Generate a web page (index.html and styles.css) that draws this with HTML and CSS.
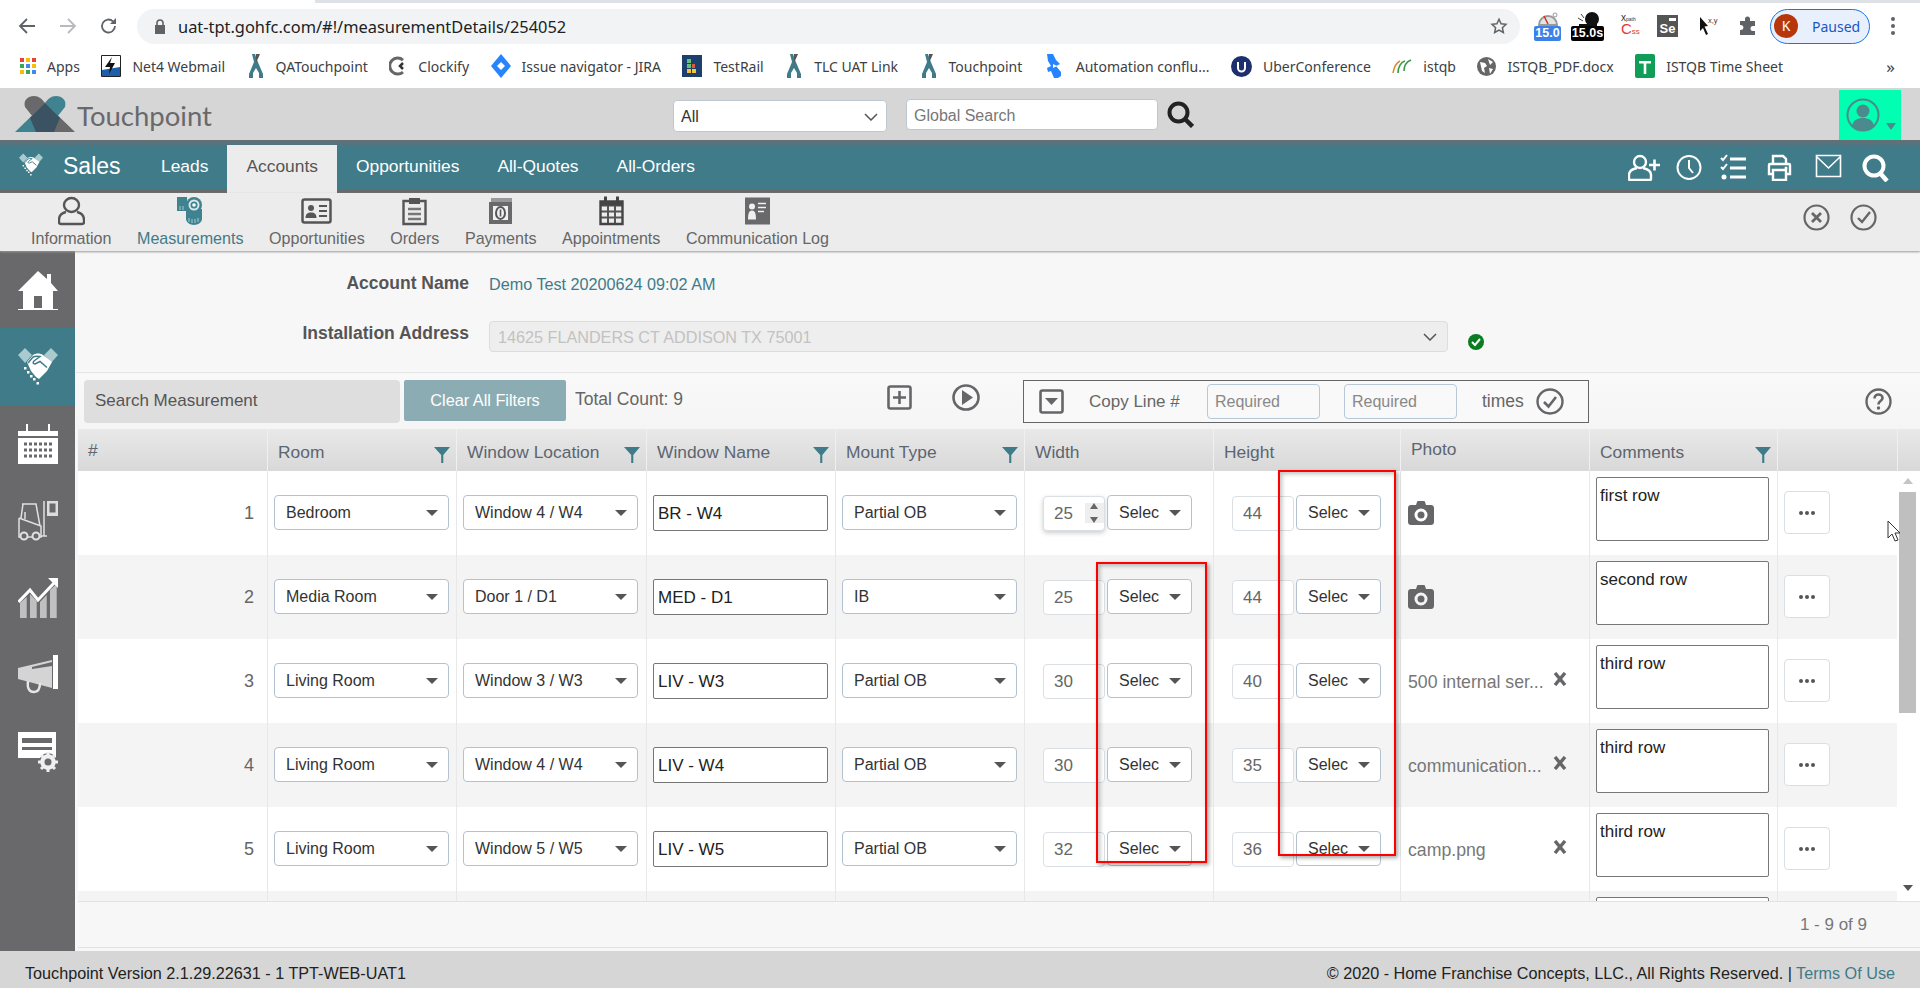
FILE: index.html
```html
<!DOCTYPE html>
<html lang="en">
<head>
  <meta charset="UTF-8" />
  <title>Touchpoint</title>
  <link rel="stylesheet" href="styles.css">
</head>
<body>
  <svg class="defs" width="0" height="0">
    <symbol id="shake" viewBox="0 0 40 40">
      <path fill="#a9cbd0" d="M7 1l7 7-7 8-7-8zM33 1l7 7-7 8-7-8z"/>
      <path fill="#fff" d="M9 15l6-7c3-2 7-2 10 0l9 7-5 9-8 8-3-2-5-6z"/>
      <path fill="none" stroke="#3f7b89" stroke-width="1.500" d="M10 16l5-6c2-1 4-1 7-.5l-6 4.500c-1.500 1.500-1 3 1 3l5-2.500 7 6"/>
      <path fill="#fff" d="M6 20h2.500v2.500H6zM9 24h2.500v2.500H9zM12 28h2.500v2.500H12zM15 31h2.500v2.500H15zM18.500 35H21v2.500h-2.500z"/>
    </symbol>
    <symbol id="filter" viewBox="0 0 16 16">
      <path fill="#3f7b89" d="M0 0h16L9.300 8v8H7.200V8z"/>
    </symbol>
    <symbol id="camera" viewBox="0 0 26 24">
      <path fill="#666669" fill-rule="evenodd" d="M3 4h5l1-3c.2-.6.6-1 1.400-1h5.200c.8 0 1.200.4 1.400 1l1 3h5c1.700 0 3 1.300 3 3v14c0 1.700-1.300 3-3 3H3c-1.700 0-3-1.300-3-3V7c0-1.700 1.300-3 3-3zm10 3.500a6.500 6.500 0 1 0 0 13 6.500 6.500 0 0 0 0-13zm0 3a3.500 3.500 0 1 1 0 7 3.500 3.500 0 0 1 0-7z"/>
    </symbol>
    <symbol id="times" viewBox="0 0 14 14">
      <path fill="none" stroke="#666669" stroke-width="3.400" d="M2 1l10 12M12 1L2 13"/>
    </symbol>
    <symbol id="tlc" viewBox="0 0 18 24">
      <path fill="#3f7b89" d="M5 0h3l2 6 6 14v4h-4v-5l-3-5-3 5v5H2v-4l5-12z"/>
      <path fill="#555" d="M9 0h4L9 9z"/>
    </symbol>
  </svg>

  <div class="tabstrip"><div class="tab-white"></div></div>

  <div class="browserbar">
    <svg class="bicon back" width="18" height="18" viewBox="0 0 18 18"><path fill="none" stroke="#5f6368" stroke-width="1.800" d="M17 9H2M9 2L2 9l7 7"/></svg>
    <svg class="bicon forward" width="18" height="18" viewBox="0 0 18 18"><path fill="none" stroke="#b8babd" stroke-width="1.800" d="M1 9h15M9 2l7 7-7 7"/></svg>
    <svg class="bicon reload" width="18" height="18" viewBox="0 0 18 18"><path fill="none" stroke="#5f6368" stroke-width="1.800" d="M15 9a6.500 6.500 0 1 1-2-4.700"/><path fill="#5f6368" d="M16 1v6h-6z"/></svg>
    <div class="omnibox">
      <svg width="12" height="15" viewBox="0 0 12 15"><path fill="#5f6368" d="M1 6h10v9H1z"/><path fill="none" stroke="#5f6368" stroke-width="1.600" d="M3 6V4a3 3 0 0 1 6 0v2"/></svg>
      <span class="url">uat-tpt.gohfc.com/#!/measurementDetails/254052</span>
      <svg class="star" width="18" height="18" viewBox="0 0 24 24"><path fill="none" stroke="#5f6368" stroke-width="2" d="M12 3l2.800 6 6.500.8-4.800 4.400 1.300 6.400L12 17.400l-5.800 3.200 1.300-6.400L2.700 9.800 9.200 9z"/></svg>
    </div>
    <div class="ext ext-gauge">
      <svg width="20" height="14" viewBox="0 0 20 14"><path fill="#e4e4e4" stroke="#999" stroke-width="2" d="M1 13a9 9 0 0 1 18 0z"/><path stroke="#c0392b" stroke-width="1.500" d="M10 12L6 4"/><circle cx="17" cy="3" r="2" fill="none" stroke="#999"/></svg>
      <span class="badge badge-blue">15.0</span>
    </div>
    <div class="ext ext-black">
      <svg width="24" height="14" viewBox="0 0 24 14"><circle cx="16" cy="7" r="7" fill="#111"/><path fill="#111" d="M3 12h18v2H3z"/><path stroke="#444" d="M2 6l5 3M5 2l3 4"/></svg>
      <span class="badge badge-black">15.0s</span>
    </div>
    <div class="ext-xc"><span>x<small>path</small></span><b>C<small>ss</small></b></div>
    <div class="ext-se"><i></i>Se</div>
    <svg class="ext-cursor" width="20" height="20" viewBox="0 0 20 20"><path d="M1 1l8 9-3.500.5L9 18l-2 1-3-7-3 3z" fill="#111"/><text x="9" y="7" font-size="7.500" font-family="Liberation Sans, sans-serif" fill="#333">x,y</text></svg>
    <svg class="ext-puzzle" width="20" height="20" viewBox="0 0 20 20"><path fill="#5f6368" d="M2 5h5V3a2.500 2.500 0 0 1 5 0v2h5v5h-2a2.500 2.500 0 0 0 0 5h2v4H2v-5h1a2.500 2.500 0 0 0 0-5H2z"/></svg>
    <div class="profile"><span class="profile-k">K</span><span>Paused</span></div>
    <div class="kebab"><i></i><i></i><i></i></div>
  </div>

  <div class="bookmarks">
    <a class="bm"><svg width="16" height="16" viewBox="0 0 16 16"><path fill="#ea4335" d="M0 0h4v4H0z"/><path fill="#fbbc05" d="M6 0h4v4H6z"/><path fill="#ea4335" d="M12 0h4v4h-4z"/><path fill="#34a853" d="M0 6h4v4H0z"/><path fill="#4285f4" d="M6 6h4v4H6z"/><path fill="#fbbc05" d="M12 6h4v4h-4z"/><path fill="#fbbc05" d="M0 12h4v4H0z"/><path fill="#34a853" d="M6 12h4v4H6z"/><path fill="#4285f4" d="M12 12h4v4h-4z"/></svg>Apps</a>
    <a class="bm"><svg width="20" height="22" viewBox="0 0 20 22"><path fill="#fff" stroke="#222" d="M.5.5h19v21H.5z"/><path fill="#1d5fa8" d="M1 15l18-3v9H1z"/><path fill="#111" d="M11 2L4 12h5l-1 7 6-11H9z"/></svg>Net4 Webmail</a>
    <a class="bm"><svg width="18" height="24" viewBox="0 0 18 24"><use href="#tlc"/></svg>QATouchpoint</a>
    <a class="bm"><svg width="18" height="20" viewBox="0 0 18 20"><path fill="none" stroke="#666" stroke-width="3" d="M14 4a8 8 0 1 0 0 12"/><path fill="none" stroke="#333" stroke-width="2.500" d="M14 7l-3 3 3 3"/></svg>Clockify</a>
    <a class="bm"><svg width="20" height="24" viewBox="0 0 20 24"><path fill="#2684ff" d="M10 0l10 12-10 12L0 12z"/><path fill="#fff" d="M10 8l4 4-4 4-4-4z"/></svg>Issue navigator - JIRA</a>
    <a class="bm"><svg width="20" height="22" viewBox="0 0 20 22"><path fill="#1d3f6e" d="M0 0h20v22H0z"/><path fill="#65c179" d="M5 4h4v4H5zM5 9h4v4H5z"/><path fill="#f3c33c" d="M5 14h4v4H5zM10 14h4v4h-4z"/><path fill="#d95b43" d="M10 9h3v4h-3z"/></svg>TestRail</a>
    <a class="bm"><svg width="18" height="24" viewBox="0 0 18 24"><use href="#tlc"/></svg>TLC UAT Link</a>
    <a class="bm"><svg width="18" height="24" viewBox="0 0 18 24"><use href="#tlc"/></svg>Touchpoint</a>
    <a class="bm"><svg width="21" height="24" viewBox="0 0 21 24"><path fill="#2684ff" d="M3 0h6l3 6 4 4-4 2 5 6v4l-3 2h-4l-3-7-3 1-1-4 4-2-3-5z"/><path fill="#fff" d="M9 10l4 2-4 2z"/></svg>Automation conflu...</a>
    <a class="bm"><svg width="21" height="21" viewBox="0 0 21 21"><circle cx="10.500" cy="10.500" r="10.500" fill="#1d2f6f"/><path fill="none" stroke="#fff" stroke-width="2" d="M7 6v6a3.500 3.500 0 0 0 7 0V6"/></svg>UberConference</a>
    <a class="bm"><svg width="20" height="14" viewBox="0 0 20 14"><path fill="none" stroke="#e08a2e" stroke-width="1.600" d="M1 14C2 8 4 4 8 2"/><path fill="none" stroke="#3a9a4a" stroke-width="1.600" d="M6 14c0-6 3-11 7-12M12 12c0-5 2-9 7-11"/></svg>istqb</a>
    <a class="bm"><svg width="19" height="19" viewBox="0 0 19 19"><circle cx="9.500" cy="9.500" r="9.500" fill="#666"/><path fill="#fff" d="M3 5l5 1 2 3-3 2 1 5-3-2zM11 2l5 3-3 3zM12 11l4 1-3 5z"/></svg>ISTQB_PDF.docx</a>
    <a class="bm"><svg width="20" height="24" viewBox="0 0 20 24"><path fill="#0f9d58" d="M2 0h16a2 2 0 0 1 2 2v20a2 2 0 0 1-2 2H2a2 2 0 0 1-2-2V2a2 2 0 0 1 2-2z"/><path fill="#fff" d="M4 7h12v2.500h-4.700V20H8.700V9.500H4z"/></svg>ISTQB Time Sheet</a>
    <span class="bm-more">»</span>
  </div>

  <header class="apphead">
    <svg class="logo" width="60" height="38" viewBox="0 0 60 38">
      <path fill="#69696c" d="M10 12C8 5 13 1 19 1c5 0 8 3 11 7l30 29H30z"/>
      <path fill="#3f8290" d="M50 12c2-7-3-11-9-11-5 0-8 3-11 7L0 37h30z"/>
      <path fill="#3a5262" d="M30 8l15 15-6 14H21l-6-14z"/>
    </svg>
    <span class="brand">Touchpoint</span>
    <div class="searchall">All
      <svg width="14" height="8" viewBox="0 0 14 8"><path fill="none" stroke="#555" stroke-width="1.500" d="M1 1l6 6 6-6"/></svg>
    </div>
    <div class="globalsearch">Global Search</div>
    <svg class="bigsearch" width="27" height="27" viewBox="0 0 27 27"><circle cx="11.500" cy="11.500" r="9" fill="none" stroke="#222" stroke-width="4"/><path stroke="#222" stroke-width="4.500" d="M18 18l7.500 7.500"/></svg>
    <div class="userbox">
      <svg width="34" height="34" viewBox="0 0 34 34"><circle cx="17" cy="17" r="15.500" fill="none" stroke="#4b8a8d" stroke-width="2"/><circle cx="17" cy="13" r="6.500" fill="#4b8a8d"/><path fill="#4b8a8d" d="M6 28c1-6 6-8 11-8s10 2 11 8c-3 3-7 4-11 4s-8-1-11-4z"/></svg>
      <i class="usercaret"></i>
    </div>
  </header>

  <nav class="mainnav">
    <svg class="navshake" width="24" height="24"><use href="#shake"/></svg>
    <span class="navtitle">Sales</span>
    <a class="navlink">Leads</a>
    <a class="navlink active">Accounts</a>
    <a class="navlink">Opportunities</a>
    <a class="navlink">All-Quotes</a>
    <a class="navlink">All-Orders</a>
    <div class="navicons">
      <svg width="33" height="27" viewBox="0 0 33 27"><circle cx="12" cy="8" r="6" fill="none" stroke="#fff" stroke-width="2.400"/><path fill="none" stroke="#fff" stroke-width="2.400" d="M9 14c-5 1-8 3-8 7v4c0 .6.400 1 1 1h20c.6 0 1-.4 1-1v-4c0-4-3-6-8-7"/><path stroke="#fff" stroke-width="2.600" d="M21 11h11M26.500 5.500v11"/></svg>
      <svg width="26" height="27" viewBox="0 0 26 27"><circle cx="13" cy="13.500" r="11.500" fill="none" stroke="#fff" stroke-width="2"/><path fill="none" stroke="#fff" stroke-width="2" d="M13 6v8l4 5"/></svg>
      <svg width="26" height="26" viewBox="0 0 26 26"><path fill="none" stroke="#fff" stroke-width="2" d="M1 4l2 2 4-5M1 13l2 2 4-5"/><circle cx="4" cy="23" r="2.500" fill="#fff"/><path stroke="#fff" stroke-width="3" d="M10 5h16M10 14h16M10 23h16"/></svg>
      <svg width="25" height="27" viewBox="0 0 25 27"><path fill="none" stroke="#fff" stroke-width="2.400" d="M6 10V2h10l3 3v5M6 20H2V11c0-1 1-1 1-1h19s1 0 1 1v9h-4M6 16h13v10H6z"/><circle cx="19" cy="14" r="1.500" fill="#fff"/></svg>
      <svg width="27" height="24" viewBox="0 0 27 24"><path fill="none" stroke="#fff" stroke-width="1.600" d="M1.500 1.500h24v21h-24zM2 3l11.500 11L25 3"/></svg>
      <svg width="27" height="28" viewBox="0 0 27 28"><circle cx="12" cy="12" r="9.500" fill="none" stroke="#fff" stroke-width="4"/><path stroke="#fff" stroke-width="4.500" d="M18 19l7 8"/></svg>
    </div>
  </nav>

  <div class="subnav">
    <a class="subitem">
      <svg width="27" height="28" viewBox="0 0 27 28"><ellipse cx="13.500" cy="8" rx="7.500" ry="7" fill="none" stroke="#555" stroke-width="2.400"/><path fill="none" stroke="#555" stroke-width="2.400" d="M8 15c-5 1-7 4-7 8v2c0 1 1 2 2 2h21c1 0 2-1 2-2v-2c0-4-2-7-7-8"/></svg>
      Information
    </a>
    <a class="subitem current">
      <svg width="26" height="28" viewBox="0 0 26 28"><path fill="#3f8290" d="M0 0h10v14H0zM9 12h16v10c0 3-4 6-8 6s-8-3-8-6z"/><path stroke="#a9cbd0" d="M3 9v4M6 9v4M12 21v4M15 22v4M18 22v4M21 21v4"/><circle cx="17" cy="8" r="8" fill="#3f8290"/><circle cx="17" cy="8" r="5.500" fill="#d7e6e8"/><circle cx="17" cy="8" r="3.500" fill="#3f8290"/><circle cx="17" cy="8" r="1.800" fill="#fff"/></svg>
      Measurements
    </a>
    <a class="subitem">
      <svg width="31" height="26" viewBox="0 0 31 26"><rect x="1.500" y="1.500" width="28" height="23" rx="2" fill="none" stroke="#555" stroke-width="2.500"/><circle cx="10" cy="10" r="3" fill="#555"/><path fill="#555" d="M4.500 20c0-4 2-5.500 5.500-5.500s5.500 1.500 5.500 5.500z"/><path stroke="#555" stroke-width="2" d="M18 8h8M18 13h8M18 18h8"/></svg>
      Opportunities
    </a>
    <a class="subitem">
      <svg width="25" height="28" viewBox="0 0 25 28"><path fill="none" stroke="#555" stroke-width="2.400" d="M7 4H1.500v23h22V4H18"/><path fill="#555" d="M7 1h11v6H7z"/><path stroke="#777" stroke-width="2.400" d="M6 12h13M6 17h13M6 22h13"/></svg>
      Orders
    </a>
    <a class="subitem">
      <svg width="24" height="28" viewBox="0 0 24 28"><path fill="#999" d="M2 1h21v5H2z"/><path fill="#69696c" d="M0 5h23v22H0z"/><path fill="#f0f0f0" d="M4 9h15v14H4z"/><ellipse cx="11.500" cy="16" rx="4.500" ry="6" fill="none" stroke="#555" stroke-width="2"/><path stroke="#555" stroke-width="1.600" d="M11.500 12.500v7"/></svg>
      Payments
    </a>
    <a class="subitem">
      <svg width="25" height="29" viewBox="0 0 25 29"><path fill="none" stroke="#555" stroke-width="2" d="M1 9h23M1 15h23M1 21h23M9 9v18M16 9v18"/><path fill="none" stroke="#444" stroke-width="2.400" d="M1.500 5h22v22.500h-22z"/><path fill="#444" d="M1 5h23v4H1zM5 0h3v6H5zM17 0h3v6h-3z"/></svg>
      Appointments
    </a>
    <a class="subitem">
      <svg width="25" height="27" viewBox="0 0 25 27"><path fill="#69696c" d="M0 0h25v27H0z"/><circle cx="7" cy="9" r="3" fill="#f0f0f0"/><path fill="#f0f0f0" d="M3 22c0-6 1-9 4-9s4 3 4 9z"/><path stroke="#f0f0f0" stroke-width="1.600" d="M13 6h8M13 10h8M13 14h6"/></svg>
      Communication Log
    </a>
    <div class="subactions">
      <svg width="27" height="27" viewBox="0 0 27 27"><circle cx="13.500" cy="13.500" r="12" fill="none" stroke="#666669" stroke-width="2.200"/><path stroke="#666669" stroke-width="2.800" d="M9 9l9 9M18 9l-9 9"/></svg>
      <svg width="27" height="27" viewBox="0 0 27 27"><circle cx="13.500" cy="13.500" r="12" fill="none" stroke="#666669" stroke-width="2.200"/><path fill="none" stroke="#666669" stroke-width="2.400" d="M8 14l4 4 8-10"/></svg>
    </div>
  </div>

  <div class="workarea">
    <aside class="sidebar">
      <div class="sideitem"><svg width="40" height="40" viewBox="0 0 40 40"><path fill="#fff" fill-rule="evenodd" d="M20 1l9 8V4h4v9l7 8h-5v18h5v1H0v-1h5V21H0zM16 26v12h8V26z"/></svg></div>
      <div class="sideitem on"><svg width="40" height="40"><use href="#shake"/></svg></div>
      <div class="sideitem"><svg width="40" height="40" viewBox="0 0 40 40"><path fill="#fff" d="M0 7h8V0h2v7h20V0h2v7h8v5H0zM0 14h40v26H0z"/><path stroke="#69696c" stroke-width="3" stroke-dasharray="3 2" d="M6 20h29M6 26h29M6 32h29"/></svg></div>
      <div class="sideitem"><svg width="40" height="40" viewBox="0 0 40 40"><path fill="none" stroke="#e0e0e0" stroke-width="1.500" d="M4 3h14l4 22M5 3L3 17M1 17l22 8v11h-2M1 17v19h1M10 36h4M26 0v35h-3M24 35h5"/><path fill="none" stroke="#e0e0e0" stroke-width="1.500" d="M7 11v7"/><circle cx="6" cy="35" r="3.500" fill="none" stroke="#e0e0e0" stroke-width="2"/><circle cx="18" cy="35" r="3.500" fill="none" stroke="#e0e0e0" stroke-width="2"/><rect x="29" y="0" width="11" height="15" fill="#dcdcdc"/><rect x="31.500" y="2.500" width="6" height="9" fill="#69696c"/></svg></div>
      <div class="sideitem"><svg width="40" height="40" viewBox="0 0 40 40"><path fill="#c0c0c0" d="M2 25l6.700-6v21H2zM12 16l6.700 7v17H12zM22 24l6.700-7v23H22zM32 12l6.700-6v34H32z"/><path fill="none" stroke="#fff" stroke-width="3" d="M0.500 24L12 12l8 10L36 5"/><path fill="#fff" d="M30 0h10v10z"/></svg></div>
      <div class="sideitem"><svg width="40" height="40" viewBox="0 0 40 40"><path fill="#d4d4d4" d="M0 13l34-8v28L0 24z"/><path fill="#69696c" d="M14 12l20-5v4l-20 3z"/><path fill="#fff" d="M35 0h5v34h-5z"/><path fill="none" stroke="#e6e6e6" stroke-width="2.400" d="M10 26c-1 7 1 11 6 11s6-4 6-9"/></svg></div>
      <div class="sideitem"><svg width="40" height="40" viewBox="0 0 40 40"><path fill="#fff" d="M0 0h38v30H22v-4H0z"/><path fill="#69696c" d="M4 6h30v5H4zM4 15h30v3H4z"/><circle cx="30" cy="30" r="9" fill="#69696c"/><circle cx="30" cy="30" r="6" fill="none" stroke="#f0f0f0" stroke-width="3.500"/><path stroke="#f0f0f0" stroke-width="3" d="M30 20v20M20 30h20M23 23l14 14M37 23L23 37"/><circle cx="30" cy="30" r="3.500" fill="#69696c"/></svg></div>
    </aside>

    <main class="content">
      <section class="account">
        <div class="acct-label">Account Name</div>
        <div class="acct-name">Demo Test 20200624 09:02 AM</div>
        <div class="acct-label acct-label-up">Installation Address</div>
        <div class="acct-addr">
          <div class="addr-select">14625 FLANDERS CT ADDISON TX 75001
            <svg width="14" height="8" viewBox="0 0 14 8"><path fill="none" stroke="#555" stroke-width="1.500" d="M1 1l6 6 6-6"/></svg>
          </div>
          <svg class="addr-ok" width="16" height="16" viewBox="0 0 16 16"><circle cx="8" cy="8" r="8" fill="#0a7d22"/><path fill="none" stroke="#fff" stroke-width="2" d="M4 8l3 3 5-6"/></svg>
        </div>
      </section>

      <section class="tools">
        <div class="search-meas">Search Measurement</div>
        <button class="clearbtn" type="button">Clear All Filters</button>
        <div class="total">Total Count: 9</div>
        <svg class="tool-add" width="25" height="25" viewBox="0 0 25 25"><rect x="1.500" y="1.500" width="22" height="22" rx="2" fill="none" stroke="#666669" stroke-width="2.600"/><path stroke="#666669" stroke-width="2.600" d="M12.500 6v13M6 12.500h13"/></svg>
        <svg class="tool-play" width="28" height="27" viewBox="0 0 28 27"><ellipse cx="14" cy="13.500" rx="12.500" ry="12" fill="none" stroke="#666669" stroke-width="2.600"/><path fill="#666669" d="M10 6l11 7.500L10 21z"/></svg>
        <div class="copybox">
          <svg width="25" height="25" viewBox="0 0 25 25"><rect x="1.500" y="1.500" width="22" height="22" rx="2" fill="none" stroke="#666669" stroke-width="2.600"/><path fill="#666669" d="M6 9h13l-6.500 7z"/></svg>
          <span class="copy-label">Copy Line #</span>
          <div class="req req-a">Required</div>
          <div class="req req-b">Required</div>
          <span class="copy-times">times</span>
          <svg width="28" height="27" viewBox="0 0 28 27"><ellipse cx="14" cy="13.500" rx="12.500" ry="12" fill="none" stroke="#666669" stroke-width="2.400"/><path fill="none" stroke="#666669" stroke-width="2.600" d="M8 14l4.500 4.500L20 9"/></svg>
        </div>
        <svg class="tool-help" width="27" height="27" viewBox="0 0 27 27"><circle cx="13.500" cy="13.500" r="12" fill="none" stroke="#666669" stroke-width="2.400"/><path fill="none" stroke="#666669" stroke-width="2.600" d="M9.500 10.500c0-2.500 2-4 4-4s4 1.500 4 3.500-1.500 2.800-2.500 3.500-1.500 1.500-1.500 3"/><circle cx="13.500" cy="20" r="1.700" fill="#666669"/></svg>
      </section>

      <div class="grid-head">
        <div class="hcell">#</div>
        <div class="hcell">Room<svg class="funnel" width="16" height="16"><use href="#filter"/></svg></div>
        <div class="hcell">Window Location<svg class="funnel" width="16" height="16"><use href="#filter"/></svg></div>
        <div class="hcell">Window Name<svg class="funnel" width="16" height="16"><use href="#filter"/></svg></div>
        <div class="hcell">Mount Type<svg class="funnel" width="16" height="16"><use href="#filter"/></svg></div>
        <div class="hcell">Width</div>
        <div class="hcell">Height</div>
        <div class="hcell hcell-up">Photo</div>
        <div class="hcell">Comments<svg class="funnel" width="16" height="16"><use href="#filter"/></svg></div>
        <div class="hcell"></div>
        <div class="hcell hcell-end"></div>
      </div>

      <div class="grid-wrap">
        <div class="grid-body">
          <div class="row">
            <div class="cell num">1</div>
            <div class="cell"><div class="dd"><span>Bedroom</span><i></i></div></div>
            <div class="cell"><div class="dd"><span>Window 4 / W4</span><i></i></div></div>
            <div class="cell"><input class="wname" value="BR - W4"></div>
            <div class="cell"><div class="dd"><span>Partial OB</span><i></i></div></div>
            <div class="cell dim"><div class="numbox focused">25<div class="spin"><i class="up"></i><i class="down"></i></div></div><div class="dd dd-short"><span>Selec</span><i></i></div></div>
            <div class="cell dim"><div class="numbox">44</div><div class="dd dd-short"><span>Selec</span><i></i></div></div>
            <div class="cell photo"><svg width="26" height="24"><use href="#camera"/></svg></div>
            <div class="cell"><textarea class="note">first row</textarea></div>
            <div class="cell"><button class="more" type="button"><i></i><i></i><i></i></button></div>
          </div>
          <div class="row">
            <div class="cell num">2</div>
            <div class="cell"><div class="dd"><span>Media Room</span><i></i></div></div>
            <div class="cell"><div class="dd"><span>Door 1 / D1</span><i></i></div></div>
            <div class="cell"><input class="wname" value="MED - D1"></div>
            <div class="cell"><div class="dd"><span>IB</span><i></i></div></div>
            <div class="cell dim"><div class="numbox">25</div><div class="dd dd-short"><span>Selec</span><i></i></div></div>
            <div class="cell dim"><div class="numbox">44</div><div class="dd dd-short"><span>Selec</span><i></i></div></div>
            <div class="cell photo"><svg width="26" height="24"><use href="#camera"/></svg></div>
            <div class="cell"><textarea class="note">second row</textarea></div>
            <div class="cell"><button class="more" type="button"><i></i><i></i><i></i></button></div>
          </div>
          <div class="row">
            <div class="cell num">3</div>
            <div class="cell"><div class="dd"><span>Living Room</span><i></i></div></div>
            <div class="cell"><div class="dd"><span>Window 3 / W3</span><i></i></div></div>
            <div class="cell"><input class="wname" value="LIV - W3"></div>
            <div class="cell"><div class="dd"><span>Partial OB</span><i></i></div></div>
            <div class="cell dim"><div class="numbox">30</div><div class="dd dd-short"><span>Selec</span><i></i></div></div>
            <div class="cell dim"><div class="numbox">40</div><div class="dd dd-short"><span>Selec</span><i></i></div></div>
            <div class="cell photo"><span class="fname">500 internal ser...</span><svg class="fx" width="14" height="14"><use href="#times"/></svg></div>
            <div class="cell"><textarea class="note">third row</textarea></div>
            <div class="cell"><button class="more" type="button"><i></i><i></i><i></i></button></div>
          </div>
          <div class="row">
            <div class="cell num">4</div>
            <div class="cell"><div class="dd"><span>Living Room</span><i></i></div></div>
            <div class="cell"><div class="dd"><span>Window 4 / W4</span><i></i></div></div>
            <div class="cell"><input class="wname" value="LIV - W4"></div>
            <div class="cell"><div class="dd"><span>Partial OB</span><i></i></div></div>
            <div class="cell dim"><div class="numbox">30</div><div class="dd dd-short"><span>Selec</span><i></i></div></div>
            <div class="cell dim"><div class="numbox">35</div><div class="dd dd-short"><span>Selec</span><i></i></div></div>
            <div class="cell photo"><span class="fname">communication...</span><svg class="fx" width="14" height="14"><use href="#times"/></svg></div>
            <div class="cell"><textarea class="note">third row</textarea></div>
            <div class="cell"><button class="more" type="button"><i></i><i></i><i></i></button></div>
          </div>
          <div class="row">
            <div class="cell num">5</div>
            <div class="cell"><div class="dd"><span>Living Room</span><i></i></div></div>
            <div class="cell"><div class="dd"><span>Window 5 / W5</span><i></i></div></div>
            <div class="cell"><input class="wname" value="LIV - W5"></div>
            <div class="cell"><div class="dd"><span>Partial OB</span><i></i></div></div>
            <div class="cell dim"><div class="numbox">32</div><div class="dd dd-short"><span>Selec</span><i></i></div></div>
            <div class="cell dim"><div class="numbox">36</div><div class="dd dd-short"><span>Selec</span><i></i></div></div>
            <div class="cell photo"><span class="fname">camp.png</span><svg class="fx" width="14" height="14"><use href="#times"/></svg></div>
            <div class="cell"><textarea class="note">third row</textarea></div>
            <div class="cell"><button class="more" type="button"><i></i><i></i><i></i></button></div>
          </div>
          <div class="row">
            <div class="cell"></div><div class="cell"></div><div class="cell"></div><div class="cell"></div><div class="cell"></div><div class="cell"></div><div class="cell"></div><div class="cell"></div>
            <div class="cell"><textarea class="note"></textarea></div>
            <div class="cell"></div>
          </div>
        </div>
        <div class="vscroll">
          <i class="arrow-up"></i>
          <div class="thumb"></div>
          <i class="arrow-down"></i>
        </div>
      </div>

      <div class="pager">1 - 9 of 9</div>
    </main>
  </div>

  <footer class="appfoot">
    <span>Touchpoint Version 2.1.29.22631 - 1 TPT-WEB-UAT1</span>
    <span>© 2020 - Home Franchise Concepts, LLC., All Rights Reserved. | <a class="terms">Terms Of Use</a></span>
  </footer>

  <!-- red annotation boxes drawn over the screenshot, plus the mouse pointer -->
  <div class="mark mark-width"></div>
  <div class="mark mark-height"></div>
  <svg class="pointer" width="14" height="22" viewBox="0 0 14 22"><path fill="#fff" stroke="#333" d="M1 1v17l4-4 3 7 3-1-3-7h5z"/></svg>
</body>
</html>
```

FILE: styles.css
```css
* {
  box-sizing: border-box;
}

html, body {
  margin: 0;
  height: 100%;
}

body {
  width: 1920px;
  height: 988px;
  overflow: hidden;
  display: flex;
  flex-direction: column;
  position: relative;
  font-family: "Liberation Sans", Arial, sans-serif;
  font-size: 16px;
  color: #444;
  background: #fff;
}

.defs {
  position: absolute;
}

/* browser chrome */
.tabstrip {
  height: 3px;
  background: #dee1e6;
  flex: none;
}

.tab-white {
  width: 315px;
  height: 3px;
  background: #fff;
}

.browserbar {
  height: 41px;
  flex: none;
  display: flex;
  align-items: center;
  padding-left: 18px;
  padding-top: 5px;
  background: #fff;
}

.bicon {
  flex: none;
}

.forward {
  margin-left: 23px;
}

.reload {
  margin-left: 23px;
}

.omnibox {
  width: 1383px;
  height: 35px;
  margin-left: 19px;
  border-radius: 18px;
  background: #f1f3f4;
  display: flex;
  align-items: center;
  padding-left: 17px;
  flex: none;
}

.url {
  margin-left: 12px;
  font-family: "Noto Sans", sans-serif;
  font-size: 16.400px;
  color: #202124;
}

.star {
  margin-left: auto;
  margin-right: 12px;
}

.ext {
  height: 29px;
  display: flex;
  flex-direction: column;
  align-items: center;
  justify-content: flex-end;
  flex: none;
}

.ext-gauge {
  margin-left: 14px;
  width: 27px;
}

.ext-black {
  margin-left: 10px;
  width: 33px;
}

.badge {
  font-size: 12.500px;
  font-weight: bold;
  line-height: 15px;
  color: #fff;
  text-align: center;
  width: 100%;
  border-radius: 2px;
}

.badge-blue {
  background: #3b82e8;
}

.badge-black {
  background: #000;
}

.ext-xc {
  width: 16px;
  margin-left: 17px;
  font-size: 10px;
  line-height: 8px;
  color: #333;
  flex: none;
}

.ext-xc small {
  font-size: 5px;
}

.ext-xc span,
.ext-xc b {
  display: block;
}

.ext-xc b {
  font-size: 15px;
  line-height: 12px;
  font-weight: normal;
  color: #e5393b;
}

.ext-xc b small {
  font-size: 8px;
}

.ext-se {
  width: 21px;
  height: 22px;
  margin-left: 20px;
  padding-top: 6px;
  position: relative;
  background: #555;
  color: #fff;
  font-size: 13px;
  font-weight: bold;
  text-align: center;
  flex: none;
}

.ext-se i {
  position: absolute;
  top: 3px;
  right: 2px;
  width: 7px;
  height: 3px;
  background: #fff;
}

.ext-cursor {
  margin-left: 21px;
  flex: none;
}

.ext-puzzle {
  margin-left: 19px;
  flex: none;
}

.profile {
  width: 100px;
  height: 35px;
  margin-left: 12px;
  border: 1px solid #1a73e8;
  border-radius: 18px;
  background: #e8f0fe;
  display: flex;
  align-items: center;
  padding-left: 3px;
  gap: 14px;
  font-family: "Noto Sans", sans-serif;
  font-size: 14px;
  color: #1a56c4;
  flex: none;
}

.profile-k {
  width: 24px;
  height: 24px;
  border-radius: 50%;
  background: #b8360b;
  color: #fff;
  font-size: 14px;
  text-align: center;
  line-height: 24px;
}

.kebab {
  margin-left: 21px;
  display: flex;
  flex-direction: column;
  gap: 3px;
}

.kebab i {
  width: 4px;
  height: 4px;
  border-radius: 50%;
  background: #5f6368;
}

.bookmarks {
  height: 44px;
  flex: none;
  display: flex;
  align-items: center;
  padding-left: 20px;
  gap: 21.500px;
  background: #fff;
  font-family: "Noto Sans", sans-serif;
  font-size: 14px;
  color: #3c4043;
}

.bm {
  display: flex;
  align-items: center;
  gap: 11px;
  white-space: nowrap;
}

.bm-more {
  margin-left: auto;
  margin-right: 25px;
  font-size: 17px;
}

/* app header */
.apphead {
  height: 52px;
  flex: none;
  display: flex;
  align-items: center;
  padding-left: 15px;
  background: #d6d6d6;
}

.brand {
  margin-left: 2px;
  width: 596px;
  padding-top: 2px;
  font-family: Lato, sans-serif;
  font-size: 27.500px;
  color: #69696c;
}

.searchall {
  width: 214px;
  height: 32px;
  margin-top: 3px;
  padding: 2px 8px 0 7px;
  background: #fff;
  border: 1px solid #bcc7d2;
  border-radius: 4px;
  display: flex;
  align-items: center;
  justify-content: space-between;
  color: #333;
}

.globalsearch {
  width: 252px;
  height: 31px;
  margin-left: 19px;
  padding-left: 7px;
  background: #fff;
  border: 1px solid #bcc7d2;
  border-radius: 4px;
  line-height: 31px;
  color: #777;
}

.bigsearch {
  margin-left: 9px;
}

.userbox {
  width: 62px;
  height: 50px;
  margin-left: auto;
  margin-right: 19px;
  margin-top: 2px;
  background: #00ffb0;
  display: flex;
  align-items: center;
  padding-left: 7px;
  position: relative;
}

.usercaret {
  position: absolute;
  right: 5px;
  bottom: 10px;
  border: 5px solid transparent;
  border-top: 7px solid #4b8a8d;
  border-bottom: 0;
}

/* teal nav */
.mainnav {
  height: 53px;
  flex: none;
  display: flex;
  align-items: stretch;
  padding: 5px 0 0 19px;
  background: linear-gradient(#666e74 0, #3f7b89 8px, #3f7b89 49px, #69696c 49px);
}

.navshake {
  align-self: flex-start;
  margin-top: 8px;
}

.navtitle {
  margin-left: 20px;
  width: 79px;
  padding-top: 8px;
  font-size: 23px;
  color: #fff;
}

.navlink {
  padding: 11px 19px 0;
  font-size: 17.400px;
  color: #fff;
}

.navlink.active {
  background: #ececec;
  color: #555;
}

.navicons {
  margin-left: auto;
  margin-right: 31px;
  display: flex;
  align-items: flex-start;
  gap: 15px;
  padding-top: 9px;
}

.navicons svg:nth-child(3) {
  margin-left: 3px;
}

.navicons svg:nth-child(4) {
  margin-left: 6px;
}

.navicons svg:nth-child(5) {
  margin-left: 8px;
}

.navicons svg:nth-child(6) {
  margin-left: 5px;
}

/* sub nav */
.subnav {
  height: 58px;
  flex: none;
  display: flex;
  gap: 25.500px;
  padding-left: 31px;
  background: #ececec;
  box-shadow: 0 1px 2px #999;
  position: relative;
}

.subitem {
  display: flex;
  flex-direction: column;
  align-items: center;
  height: 57px;
  padding-top: 3px;
  font-size: 16.100px;
  color: #666;
}

.subitem svg {
  height: 30px;
  margin-bottom: 3px;
  flex: none;
}

.subitem.current {
  color: #3f7b89;
}

.subactions {
  margin-left: auto;
  margin-right: 43px;
  padding-top: 11px;
  display: flex;
  gap: 20px;
}

/* work area */
.workarea {
  flex: 1;
  display: flex;
  min-height: 0;
}

.sidebar {
  width: 75px;
  flex: none;
  background: #69696c;
}

.sideitem {
  height: 77px;
  display: flex;
  align-items: center;
  justify-content: center;
}

.sideitem.on {
  background: #3f7b89;
}

.content {
  flex: 1;
  min-width: 0;
  background: #f7f7f7;
  display: flex;
  flex-direction: column;
}

.account {
  height: 121px;
  flex: none;
  display: grid;
  grid-template-columns: 394px 1fr;
  grid-template-rows: 24px 31px;
  column-gap: 20px;
  row-gap: 26px;
  padding-top: 20px;
  align-items: center;
}

.acct-label {
  text-align: right;
  font-size: 17.500px;
  font-weight: bold;
  color: #555;
}

.acct-label-up {
  margin-top: -6px;
}

.acct-name {
  padding-top: 2px;
  color: #3f7b89;
  font-size: 16.200px;
}

.acct-addr {
  display: flex;
  align-items: center;
}

.addr-select {
  width: 959px;
  height: 31px;
  padding: 1px 10px 0 8px;
  background: #eee;
  border: 1px solid #ddd;
  border-radius: 4px;
  display: flex;
  align-items: center;
  justify-content: space-between;
  font-size: 16.200px;
  color: #c2c2c2;
}

.addr-ok {
  margin-left: 20px;
  margin-top: 10px;
}

.tools {
  height: 57px;
  flex: none;
  display: flex;
  align-items: flex-start;
  margin-left: 1px;
  padding: 7px 0 0 8px;
  border-top: 1px solid #e4e4e4;
  background: linear-gradient(#f9f9f9, #f5f5f5);
}

.search-meas {
  width: 316px;
  height: 43px;
  padding-left: 11px;
  background: #dedede;
  border-radius: 4px;
  line-height: 41px;
  font-size: 17px;
  color: #555;
}

.clearbtn {
  width: 162px;
  height: 41px;
  margin-left: 4px;
  padding: 0;
  border: none;
  border-radius: 2px;
  background: #8bacb3;
  font-family: inherit;
  font-size: 16.300px;
  color: #fff;
}

.total {
  width: 312px;
  margin-left: 9px;
  line-height: 39px;
  font-size: 17.500px;
  color: #666;
}

.tool-add {
  margin-top: 5px;
}

.tool-play {
  margin-left: 40px;
  margin-top: 4px;
}

.copybox {
  width: 566px;
  height: 43px;
  margin-left: 43px;
  padding-left: 15px;
  display: flex;
  align-items: center;
  border: 1px solid #666;
  background: #f9f9f9;
  color: #666;
}

.copy-label {
  width: 118px;
  margin-left: 25px;
  font-size: 17px;
}

.req {
  width: 113px;
  height: 35px;
  padding-left: 7px;
  border: 1px solid #b9c8d6;
  border-radius: 4px;
  line-height: 33px;
  color: #888;
}

.req-b {
  margin-left: 24px;
}

.copy-times {
  width: 54px;
  margin-left: 25px;
  font-size: 17.500px;
}

.tool-help {
  margin-left: auto;
  margin-right: 28px;
  margin-top: 8px;
}

/* measurement grid */
.grid-head,
.row {
  display: grid;
  grid-template-columns: 189px 189px 190px 189px 189px 189px 187px 189px 188px 120px;
}

.grid-head {
  grid-template-columns: 189px 189px 190px 189px 189px 189px 187px 189px 188px 120px 1fr;
  height: 42px;
  flex: none;
  margin-left: 3px;
  background: linear-gradient(#e9e9e9, #d8d8d8);
}

.hcell {
  position: relative;
  padding: 13px 0 0 10px;
  border-left: 1px solid #f0f0f0;
  font-size: 17.400px;
  line-height: 20px;
  color: #5c6670;
}

.hcell:first-child {
  border-left: 0;
  padding-top: 11px;
}

.hcell-up {
  padding-top: 10px;
}

.funnel {
  position: absolute;
  right: 6px;
  top: 18px;
}

.grid-wrap {
  height: 430px;
  flex: none;
  margin-left: 3px;
  display: flex;
  overflow: hidden;
  background: #fff;
}

.grid-body {
  width: 1819px;
  flex: none;
}

.row {
  height: 84px;
  background: #fff;
}

.row:nth-child(even) {
  background: #f4f4f4;
}

.cell {
  display: flex;
  align-items: center;
  padding: 0 6px;
  border-left: 1px solid #e8e8e8;
}

.cell:first-child {
  border-left: 0;
}

.num {
  justify-content: flex-end;
  padding-right: 13px;
  font-size: 18px;
  color: #666;
}

.dd {
  width: 175px;
  height: 35px;
  padding: 2px 10px 0 11px;
  background: #fff;
  border: 1px solid #b4c2cf;
  border-radius: 4px;
  display: flex;
  align-items: center;
  justify-content: space-between;
  color: #333;
  margin-bottom: 2px;
}

.dd span {
  white-space: nowrap;
}

.dd i {
  flex: none;
  border: 6px solid transparent;
  border-top: 6px solid #555;
  border-bottom: 0;
}

.dd-short {
  width: 85px;
  flex: none;
  margin-left: 2px;
}

.wname {
  width: 175px;
  height: 36px;
  padding: 2px 4px 0;
  border: 1px solid #777;
  border-radius: 2px;
  background: #fff;
  font-family: inherit;
  font-size: 17px;
  color: #222;
}

.dim {
  padding-left: 18px;
  padding-right: 0;
}

.numbox {
  width: 62px;
  height: 35px;
  flex: none;
  padding-left: 10px;
  position: relative;
  background: #fff;
  border: 1px solid #dadfe3;
  border-radius: 4px;
  line-height: 33px;
  font-size: 17px;
  color: #666;
}

.numbox.focused {
  box-shadow: 0 2px 5px #ccc;
}

.spin {
  position: absolute;
  right: 0;
  top: 6px;
  width: 19px;
  height: 20px;
  background: #eee;
}

.spin i {
  position: absolute;
  left: 5px;
  border: 4.500px solid transparent;
}

.spin .up {
  top: 0;
  border-top: 0;
  border-bottom: 6px solid #666;
}

.spin .down {
  bottom: 0;
  border-bottom: 0;
  border-top: 6px solid #666;
}

.photo {
  padding-left: 7px;
  position: relative;
  color: #777;
}

.fname {
  font-size: 17.700px;
  white-space: nowrap;
  margin-top: 2px;
}

.fx {
  position: absolute;
  left: 152px;
  top: 33px;
}

.note {
  width: 173px;
  height: 64px;
  padding: 8px 3px 2px;
  margin-top: -9px;
  border: 1px solid #777;
  border-radius: 2px;
  background: #fff;
  resize: none;
  overflow: hidden;
  font-family: inherit;
  font-size: 17px;
  line-height: 19px;
  color: #222;
}

.more {
  width: 46px;
  height: 43px;
  margin-bottom: 1px;
  padding: 0;
  background: #fff;
  border: 1px solid #dadfe3;
  border-radius: 4px;
  display: flex;
  align-items: center;
  justify-content: center;
  gap: 2px;
}

.more i {
  width: 4px;
  height: 4px;
  border-radius: 50%;
  background: #555;
}

.vscroll {
  width: 18px;
  margin-left: 2px;
  flex: none;
  position: relative;
}

.thumb {
  position: absolute;
  top: 21px;
  left: 0;
  width: 17px;
  height: 221px;
  background: #bfbfbf;
}

.arrow-up {
  position: absolute;
  top: 7px;
  left: 4px;
  border: 5px solid transparent;
  border-bottom: 6px solid #c4c4c4;
  border-top: 0;
}

.arrow-down {
  position: absolute;
  top: 414px;
  left: 4px;
  border: 5px solid transparent;
  border-top: 6px solid #555;
  border-bottom: 0;
}

.pager {
  height: 47px;
  flex: none;
  margin-left: 3px;
  padding-right: 53px;
  border-top: 1px solid #e2e2e2;
  border-bottom: 1px solid #e2e2e2;
  text-align: right;
  line-height: 46px;
  font-size: 17px;
  color: #777;
}

/* footer */
.appfoot {
  height: 37px;
  flex: none;
  display: flex;
  align-items: center;
  justify-content: space-between;
  padding: 8px 25px 0;
  background: #d6d6d6;
  font-size: 16.200px;
  color: #222;
}

.terms {
  color: #3f7b89;
}

/* annotation overlays */
.mark {
  position: absolute;
  border: 2px solid #f00;
  box-shadow: 2px 2px 4px rgba(0, 0, 0, 0.35), inset 2px 2px 4px rgba(0, 0, 0, 0.25);
}

.mark-width {
  left: 1096px;
  top: 562px;
  width: 111px;
  height: 301px;
}

.mark-height {
  left: 1278px;
  top: 470px;
  width: 118px;
  height: 386px;
}

.pointer {
  position: absolute;
  left: 1887px;
  top: 520px;
}
```
